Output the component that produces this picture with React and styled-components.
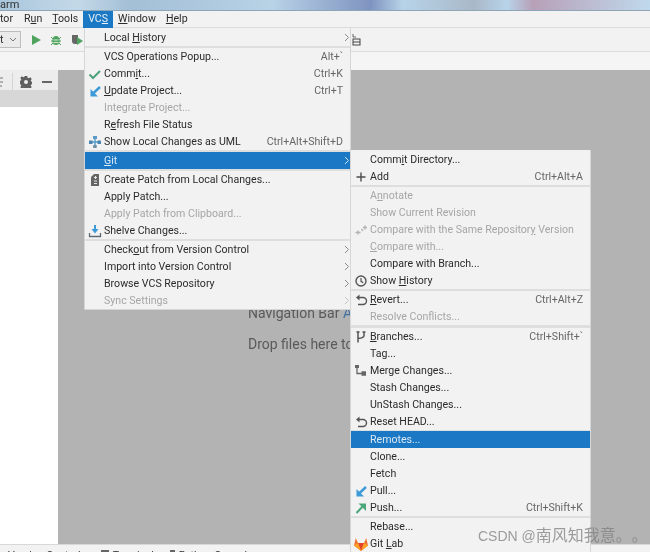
import React from "react";
import styled, { createGlobalStyle } from "styled-components";

const Global = createGlobalStyle`
  html, body { margin: 0; padding: 0; background: #b3b3b3; }
  * { box-sizing: border-box; }
`;

const Window = styled.div`
  position: relative;
  width: 650px;
  height: 552px;
  overflow: hidden;
  display: flex;
  flex-direction: column;
  font-family: Roboto, "Noto Sans", sans-serif;
  font-size: 10.6px;
  color: #2b2b2b;
  background: #f2f2f2;
  filter: blur(0.45px);
`;

const TitleBar = styled.div`
  height: 11px;
  flex: none;
  font-size: 11px;
  line-height: 9px;
  color: #333;
  border-bottom: 1px solid #8fa6b8;
  background: linear-gradient(90deg, #a9c6dc 0, #c4d9e8 12%, #a3bfd6 20%, #b8d2e6 42%, #7f93c0 57%, #b7d3e8 62%, #a9b8c8 73%, #b8d4ea 78%, #b7a0b8 82%, #c0d9ec 100%);
`;

const MenuBar = styled.div`
  height: 17px;
  flex: none;
  display: flex;
  align-items: center;
  border-bottom: 1px solid #dcdcdc;
`;

const MenuTitle = styled.span`
  display: block;
  height: 17px;
  line-height: 16px;
  padding: 0 ${(p) => p.$px ?? 5}px;
  margin-left: ${(p) => p.$ml || 0}px;
  background: ${(p) => (p.$on ? "#1a78c4" : "transparent")};
  color: ${(p) => (p.$on ? "#e8f2fa" : "#2b2b2b")};
`;

const Toolbar = styled.div`
  height: 24px;
  flex: none;
  display: flex;
  align-items: center;
  border-bottom: 1px solid #dcdcdc;
`;

const Combo = styled.div`
  width: 21px;
  height: 17px;
  border: 1px solid #bdbdbd;
  border-left: 0;
  background: #ebebeb;
  display: flex;
  align-items: center;
  justify-content: space-between;
  padding: 0 3px 0 0;
  line-height: 14px;
`;

const ToolIcon = styled.span`
  display: flex;
  margin-left: ${(p) => p.$ml}px;
`;

const NavBar = styled.div`
  height: 18px;
  flex: none;
  background: #f5f5f5;
`;

const Main = styled.div`
  flex: 1;
  display: flex;
  min-height: 0;
`;

const SidePanel = styled.div`
  width: 58px;
  flex: none;
  display: flex;
  flex-direction: column;
  background: #fff;
`;

const SideHeader = styled.div`
  height: 20px;
  flex: none;
  background: #ededed;
  display: flex;
  align-items: center;
  padding-top: 3px;
`;

const SideBand = styled.div`
  height: 17px;
  flex: none;
  background: #d7d7d7;
`;

const SideDivider = styled.span`
  width: 1px;
  height: 17px;
  background: #d4d4d4;
  margin: 0 7px 0 9px;
`;

const Editor = styled.div`
  flex: 1;
  background: #b3b3b3;
  color: #5a5a5a;
  font-size: 14px;
  padding: 234px 0 0 190px;
  white-space: nowrap;
  overflow: hidden;
`;

const Hint = styled.div`
  height: 31px;
  line-height: 18px;
`;

const Key = styled.span`
  color: #3f6f9f;
`;

const StatusBar = styled.div`
  height: 8px;
  flex: none;
  border-top: 1px solid #d8d8d8;
  background: #f2f2f2;
  display: flex;
  align-items: flex-start;
  overflow: hidden;
  line-height: 15px;
  color: #333;
  padding: 3px 0 0 8px;
`;

const StatusItem = styled.span`
  display: flex;
  align-items: flex-start;
  gap: 4px;
  margin-left: ${(p) => p.$ml}px;
  white-space: nowrap;
`;

const StatusGlyph = styled.i`
  display: block;
  width: ${(p) => p.$w}px;
  height: 10px;
  margin-top: 2px;
  background: #666;
`;

const Popup = styled.div`
  position: absolute;
  left: ${(p) => p.$x}px;
  top: ${(p) => p.$y}px;
  width: ${(p) => p.$w}px;
  background: #f2f2f2;
  border-right: 1px solid #d6d6d6;
  border-bottom: 1px solid #d6d6d6;
  box-shadow: -1px 0 0 #d6d6d6;
  padding-top: 1px;
  display: flex;
  flex-direction: column;
`;

const Row = styled.div`
  height: 17px;
  flex: none;
  display: flex;
  align-items: center;
  padding-right: 7px;
  background: ${(p) => (p.$sel ? "#1a78c4" : "transparent")};
  color: ${(p) => (p.$sel ? "#d9e9f6" : p.$off ? "#a6a6a6" : "#2b2b2b")};
  white-space: nowrap;
`;

const IconSlot = styled.span`
  width: 19px;
  height: 17px;
  flex: none;
  display: flex;
  align-items: center;
  justify-content: center;
`;

const Label = styled.span`
  flex: 1;
`;

const Shortcut = styled.span`
  color: #666;
`;

const RowWrap = styled.div`
  position: relative;
  display: flex;
  flex-direction: column;
`;

const ChevronBox = styled.span`
  position: absolute;
  right: 0;
  top: 4px;
  width: 6px;
  height: 9px;
  display: flex;
`;

const Sep = styled.div`
  height: ${(p) => p.$h || 2}px;
  flex: none;
  background: #dedede;
`;

const Watermark = styled.div`
  position: absolute;
  left: 478px;
  top: 526px;
  font-size: 14px;
  line-height: 20px;
  color: rgba(125, 125, 125, 0.75);
  font-family: "Liberation Sans", "Noto Sans CJK SC", sans-serif;
  white-space: nowrap;
`;

const WatermarkCjk = styled.span`
  font-size: 16px;
  text-spacing-trim: space-all;
  font-feature-settings: "halt" 0, "palt" 0;
`;

const Mn = ({ t }) => {
  const i = t.indexOf("_");
  if (i < 0) return t;
  return (
    <>
      {t.slice(0, i)}
      <u>{t[i + 1]}</u>
      {t.slice(i + 2)}
    </>
  );
};

const S = ({ children, w = 14, h = 14, vb = "0 0 14 14" }) => (
  <svg width={w} height={h} viewBox={vb} fill="none">{children}</svg>
);

const Check = () => (
  <S><path d="M1.500 7.500 5 11 12 4" stroke="#4fa07c" strokeWidth="2" /></S>
);
const ArrowIn = () => (
  <S><path d="M12 3 5 9.500" stroke="#3d9ad8" strokeWidth="2.400" /><path d="M2.500 5v7.500H10z" fill="#3d9ad8" /></S>
);
const ArrowOut = () => (
  <S><path d="M2.500 12 9 5" stroke="#4aa77a" strokeWidth="2" /><path d="M4.500 2.500h7.500V10z" fill="#4aa77a" /></S>
);
const Uml = () => (
  <S><path d="M7 1v12M2 7h10" stroke="#5a9bc8" strokeWidth="1.400" /><rect x="5" y="1" width="4" height="3" fill="#5a9bc8" /><rect x="1" y="5.500" width="3.500" height="3.500" fill="#4a86b0" /><rect x="9.500" y="5.500" width="3.500" height="3.500" fill="#4a86b0" /><rect x="5.200" y="10" width="3.500" height="3" fill="#6c8ea6" /></S>
);
const Patch = () => (
  <S><path d="M3 4 6 1h5v12H3z" fill="#666" /><path d="M6 4.500h3M7.500 3v3M6 8h3M6 10.500h3" stroke="#e8e8e8" /></S>
);
const Shelve = () => (
  <S><path d="M1.500 9v3.500h11V9" stroke="#5f6b74" strokeWidth="1.300" /><path d="M7 1v5" stroke="#3d9ad8" strokeWidth="2" /><path d="M3.500 5h7L7 9.500z" fill="#3d9ad8" /></S>
);
const Plus = () => (
  <S><path d="M7 2.500v9M2.500 7h9" stroke="#4d4d4d" strokeWidth="1.400" /></S>
);
const CompareSame = () => (
  <S><path d="M1.500 9.500h5M9 4.500h4M11 2.500v4M4 7.500v4M7.500 6 9 8" stroke="#b4b4b4" strokeWidth="1.400" /></S>
);
const Clock = () => (
  <S><circle cx="7" cy="7" r="5" stroke="#555" strokeWidth="1.400" /><path d="M7 4v3.400l2.200 1.200" stroke="#555" strokeWidth="1.200" /></S>
);
const Revert = () => (
  <S><path d="M4 4.500h5a3 3 0 0 1 0 7H4" stroke="#555" strokeWidth="1.400" /><path d="M5.500 1.500v6L2 4.500z" fill="#555" /></S>
);
const Branch = () => (
  <S><path d="M4 1.500v11M10 2v3.500Q10 8 4 8.500" stroke="#555" strokeWidth="1.500" /><path d="M8.500 2h3M2.500 2h3" stroke="#555" strokeWidth="1.500" /></S>
);
const Merge = () => (
  <S><rect x="1" y="1" width="4" height="3" fill="#666" /><path d="M3 4v5.500h9M7.500 8h4.500M7.500 11h4.500" stroke="#666" strokeWidth="1.300" /></S>
);
const GitLab = () => (
  <S w={16} h={16} vb="0 0 16 16">
    <path d="M8 15 1 9.500 2.800 2 5 7h6l2.200-5L15 9.500z" fill="#f2732f" />
    <path d="M8 15 5 7h6z" fill="#e2432a" />
    <path d="M8 15 1 9.500 5 7zM8 15l7-5.500L11 7z" fill="#fca326" />
  </S>
);
const Chev = ({ c = "#8a8a8a" }) => (
  <ChevronBox><svg width="6" height="9" viewBox="0 0 6 9" fill="none"><path d="M1 1l3.500 3.500L1 8" stroke={c} /></svg></ChevronBox>
);

const Item = ({ icon, label, sc, sel, off, sub }) => (
  <RowWrap>
    <Row $sel={sel} $off={off}>
      <IconSlot>{icon}</IconSlot>
      <Label><Mn t={label} /></Label>
      {sc && <Shortcut>{sc}</Shortcut>}
    </Row>
    {sub && <Chev c={sel ? "#cfe3f3" : off ? "#c4c4c4" : "#8a8a8a"} />}
  </RowWrap>
);

const vcsMenu = [
  { label: "Local _History", sub: 1 },
  { h: 2 },
  { label: "VCS Operations Popup...", sc: "Alt+`" },
  { label: "Comm_it...", sc: "Ctrl+K", icon: <Check /> },
  { label: "_Update Project...", sc: "Ctrl+T", icon: <ArrowIn /> },
  { label: "Integrate Project...", off: 1 },
  { label: "R_efresh File Status" },
  { label: "Show Local Changes as UML", sc: "Ctrl+Alt+Shift+D", icon: <Uml /> },
  { h: 2 },
  { label: "_Git", sel: 1, sub: 1 },
  { h: 2 },
  { label: "Create Patch from Local Changes...", icon: <Patch /> },
  { label: "Apply Patch..." },
  { label: "Apply Patch from Clipboard...", off: 1 },
  { label: "Shelve Changes...", icon: <Shelve /> },
  { h: 2 },
  { label: "Check_out from Version Control", sub: 1 },
  { label: "Import into Version Control", sub: 1 },
  { label: "Browse VCS Repository", sub: 1 },
  { label: "Sync Settings", off: 1, sub: 1 },
];

const gitMenu = [
  { label: "Comm_it Directory..." },
  { label: "Add", sc: "Ctrl+Alt+A", icon: <Plus /> },
  { h: 2 },
  { label: "A_nnotate", off: 1 },
  { label: "Show Current Revision", off: 1 },
  { label: "Compare with the Same Repositor_y Version", off: 1, icon: <CompareSame /> },
  { label: "_Compare with...", off: 1 },
  { label: "Compare with Branch..." },
  { label: "Show _History", icon: <Clock /> },
  { h: 2 },
  { label: "_Revert...", sc: "Ctrl+Alt+Z", icon: <Revert /> },
  { label: "Resolve Conflicts...", off: 1 },
  { h: 3 },
  { label: "_Branches...", sc: "Ctrl+Shift+`", icon: <Branch /> },
  { label: "Tag..." },
  { label: "Merge Changes...", icon: <Merge /> },
  { label: "Stash Changes..." },
  { label: "UnStash Changes..." },
  { label: "Reset HEAD...", icon: <Revert /> },
  { h: 1 },
  { label: "Remotes...", sel: 1 },
  { label: "Clone..." },
  { label: "Fetch" },
  { label: "Pull...", icon: <ArrowIn /> },
  { label: "Push...", sc: "Ctrl+Shift+K", icon: <ArrowOut /> },
  { h: 2 },
  { label: "Rebase..." },
  { label: "Git _Lab", icon: <GitLab /> },
];

const renderMenu = (items) =>
  items.map((it, i) => (it.h ? <Sep key={i} $h={it.h} /> : <Item key={i} {...it} />));

export default function App() {
  return (
    <Window>
      <Global />
      <TitleBar>arm</TitleBar>
      <MenuBar>
        <MenuTitle $px={0}>tor</MenuTitle>
        <MenuTitle $ml={6}><Mn t="R_un" /></MenuTitle>
        <MenuTitle><Mn t="_Tools" /></MenuTitle>
        <MenuTitle $on><Mn t="VC_S" /></MenuTitle>
        <MenuTitle><Mn t="_Window" /></MenuTitle>
        <MenuTitle><Mn t="_Help" /></MenuTitle>
      </MenuBar>
      <Toolbar>
        <Combo>
          t
          <svg width="8" height="5" viewBox="0 0 8 5" fill="none"><path d="M1 1l3 3 3-3" stroke="#777" /></svg>
        </Combo>
        <ToolIcon $ml={9}>
          <svg width="12" height="12" viewBox="0 0 12 12"><path d="M2 1l9 5-9 5z" fill="#4fa35e" /></svg>
        </ToolIcon>
        <ToolIcon $ml={8}>
          <svg width="12" height="13" viewBox="0 0 12 13"><ellipse cx="6" cy="7.500" rx="3.600" ry="4.500" fill="#4fa35e" /><path d="M1 4l2 2M11 4 9 6M1 8h2M11 8H9M1 12l2-2M11 12 9 10" stroke="#4fa35e" /><path d="M3.500 7h5M3.500 9.500h5" stroke="#dcecdc" /></svg>
        </ToolIcon>
        <ToolIcon $ml={9}>
          <svg width="12" height="13" viewBox="0 0 12 13"><path d="M1 2h6v9H4a3 3 0 0 1-3-3z" fill="#666" /><path d="M6 4l6 4-6 4z" fill="#4fa35e" /></svg>
        </ToolIcon>
        <ToolIcon $ml={269}>
          <svg width="9" height="13" viewBox="0 0 9 13" fill="none"><path d="M1 1v3h3" stroke="#666" /><rect x="1" y="6" width="7" height="6" stroke="#444" /><path d="M1 9h7" stroke="#444" /></svg>
        </ToolIcon>
      </Toolbar>
      <NavBar />
      <Main>
        <SidePanel>
          <SideHeader>
            <svg width="3" height="10" viewBox="0 0 3 10" fill="none"><path d="M0 1h3M0 5h3M0 9h2" stroke="#777" /></svg>
            <SideDivider />
            <svg width="12" height="12" viewBox="0 0 24 24">
              <path fill="#5f5f5f" fillRule="evenodd" d="M9.500 0h5l.7 3.400 2.300 1 3-1.900 3 3.500-2.100 2.800 1 2.300 3 .7v4.500l-3 .7-1 2.300 2.100 2.800-3 3.500-3-1.900-2.300 1-.7 3.400h-5l-.7-3.400-2.300-1-3 1.900-3-3.500 2.100-2.800-1-2.300-3-.7V9.800l3-.7 1-2.300L.600 4l3-3.500 3 1.900 2.300-1zM12 8a4 4 0 1 0 0 8 4 4 0 0 0 0-8z" />
            </svg>
            <svg width="10" height="2" viewBox="0 0 10 2" style={{ marginLeft: 10 }}><rect width="10" height="2" fill="#666" /></svg>
          </SideHeader>
          <SideBand />
        </SidePanel>
        <Editor>
          <Hint>Navigation Bar <Key>Alt+Home</Key></Hint>
          <Hint>Drop files here to open</Hint>
        </Editor>
      </Main>
      <StatusBar>
        <StatusItem $ml={0}>Version Control</StatusItem>
        <StatusItem $ml={20}><StatusGlyph $w={8} />Terminal</StatusItem>
        <StatusItem $ml={16}><StatusGlyph $w={5} />Python Console</StatusItem>
      </StatusBar>
      <Popup $x={85} $y={28} $w={266}>{renderMenu(vcsMenu)}</Popup>
      <Popup $x={351} $y={150} $w={240}>{renderMenu(gitMenu)}</Popup>
      <Watermark>CSDN @<WatermarkCjk>南风知我意。。</WatermarkCjk></Watermark>
    </Window>
  );
}
